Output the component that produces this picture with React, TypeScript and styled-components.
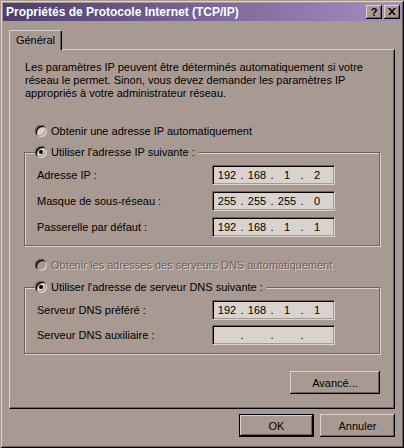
import { Fragment } from "react";
import styled, { createGlobalStyle } from "styled-components";

const face = "#a89a92";
const light = "#ded4ce";
const shadow = "#6c625c";
const field = "#dad2cd";

type Ip = string[];

const ipRows: { label: string; ip: Ip }[] = [
  { label: "Adresse IP :", ip: ["192", "168", "1", "2"] },
  { label: "Masque de sous-réseau :", ip: ["255", "255", "255", "0"] },
  { label: "Passerelle par défaut :", ip: ["192", "168", "1", "1"] },
];

const dnsRows: { label: string; ip: Ip }[] = [
  { label: "Serveur DNS préféré :", ip: ["192", "168", "1", "1"] },
  { label: "Serveur DNS auxiliaire :", ip: ["", "", "", ""] },
];

const GlobalStyle = createGlobalStyle`
  html, body { margin: 0; padding: 0; background: ${face}; }
  body {
    font-family: "Liberation Sans", Arial, sans-serif;
    font-size: 11px;
    color: #000;
  }
  * { box-sizing: border-box; }
`;

const Window = styled.div`
  width: 404px;
  height: 448px;
  padding: 3px;
  display: flex;
  flex-direction: column;
  background: ${face};
  box-shadow: inset 1px 1px ${face}, inset -1px -1px #000,
    inset 2px 2px ${light}, inset -2px -2px ${shadow};
`;

const TitleBar = styled.div`
  height: 18px;
  display: flex;
  align-items: center;
  gap: 2px;
  padding: 0 1px 0 3px;
  background: linear-gradient(to right, #4b3f6c, #a68cc4);
`;

const Title = styled.div`
  flex: 1;
  color: #fff;
  font-weight: bold;
  font-size: 12px;
  white-space: nowrap;
`;

const TitleButton = styled.div`
  width: 16px;
  height: 14px;
  display: flex;
  align-items: center;
  justify-content: center;
  background: ${face};
  font-weight: bold;
  font-size: 11px;
  padding-bottom: 1px;
  box-shadow: inset -1px -1px #000, inset 1px 1px ${light},
    inset -2px -2px ${shadow};
`;

const Body = styled.div`
  flex: 1;
  display: flex;
  flex-direction: column;
  padding: 9px 6px 0 6px;
`;

const TabStrip = styled.div`
  display: flex;
`;

const Tab = styled.div`
  position: relative;
  z-index: 1;
  width: 53px;
  height: 20px;
  margin-bottom: -1px;
  display: flex;
  align-items: center;
  justify-content: center;
  padding-bottom: 2px;
  background: ${face};
  border-left: 1px solid ${light};
  border-top: 1px solid ${light};
  border-right: 1px solid #000;
  border-radius: 2px 2px 0 0;
  box-shadow: inset -1px 0 ${shadow};
`;

const Panel = styled.div`
  height: 360px;
  display: flex;
  flex-direction: column;
  padding: 11px 13px 0 14px;
  border-left: 1px solid ${light};
  border-top: 1px solid ${light};
  border-right: 1px solid #000;
  border-bottom: 1px solid #000;
  box-shadow: inset -1px -1px ${shadow};
`;

const Intro = styled.p`
  margin: 0 0 0 1px;
  line-height: 13px;
  white-space: nowrap;
`;

const RadioRow = styled.div<{ $top: number; $disabled?: boolean }>`
  height: 14px;
  display: flex;
  align-items: center;
  gap: 4px;
  margin: ${(p) => p.$top}px 0 0 11px;
  white-space: nowrap;
  color: ${(p) => (p.$disabled ? shadow : "#000")};
  text-shadow: ${(p) => (p.$disabled ? `1px 1px ${light}` : "none")};
`;

const Radio = styled.span<{ $checked?: boolean; $disabled?: boolean }>`
  width: 12px;
  height: 12px;
  flex: none;
  border-radius: 50%;
  display: grid;
  place-items: center;
  background: ${(p) => (p.$disabled ? face : field)};
  box-shadow: inset 1px 1px ${shadow}, inset -1px -1px ${light},
    inset 2px 2px #000, inset -2px -2px ${face};

  &::after {
    content: "";
    width: 4px;
    height: 4px;
    border-radius: 50%;
    background: ${(p) => (p.$checked ? "#000" : "transparent")};
  }
`;

const Group = styled.fieldset<{ $top: number }>`
  margin: ${(p) => p.$top}px 1px 0 0;
  padding: 6px 12px 8px 12px;
  border: 1px solid ${shadow};
  box-shadow: inset 1px 1px ${light}, 1px 1px 0 ${light};
  min-inline-size: 0;
`;

const Legend = styled.legend`
  margin-left: -2px;
  padding: 0 4px 0 0;
  height: 14px;
  background: ${face};
`;

const LegendRadio = styled.span`
  height: 14px;
  display: flex;
  align-items: center;
  gap: 4px;
  white-space: nowrap;
`;

const FieldGrid = styled.div<{ $gap: number }>`
  display: grid;
  grid-template-columns: 175px 123px;
  row-gap: ${(p) => p.$gap}px;
  align-items: center;
`;

const FieldLabel = styled.span`
  white-space: nowrap;
`;

const IpBox = styled.div`
  width: 123px;
  height: 20px;
  display: flex;
  align-items: center;
  padding-left: 1px;
  background: ${field};
  border: 1px solid;
  border-color: ${shadow} ${light} ${light} ${shadow};
  box-shadow: inset 1px 1px #000, inset -1px -1px ${face};
`;

const Octet = styled.span`
  width: 26px;
  text-align: center;
`;

const Dot = styled.span`
  width: 4px;
  text-align: center;
`;

const ButtonRow = styled.div<{ $top: number; $right?: number }>`
  display: flex;
  justify-content: flex-end;
  gap: 6px;
  margin: ${(p) => p.$top}px ${(p) => p.$right ?? 0}px 0 0;
`;

const PushButton = styled.div<{ $w: number; $default?: boolean }>`
  width: ${(p) => p.$w}px;
  height: 23px;
  display: flex;
  align-items: center;
  justify-content: center;
  background: ${face};
  border: ${(p) => (p.$default ? "1px solid #000" : "none")};
  box-shadow: inset -1px -1px #000, inset 1px 1px ${light},
    inset -2px -2px ${shadow};
`;

function IpField({ ip }: { ip: Ip }) {
  return (
    <IpBox>
      {ip.map((o, i) => (
        <Fragment key={i}>
          <Octet>{o}</Octet>
          {i < 3 && <Dot>.</Dot>}
        </Fragment>
      ))}
    </IpBox>
  );
}

export default function App() {
  return (
    <>
      <GlobalStyle />
      <Window>
        <TitleBar>
          <Title>Propriétés de Protocole Internet (TCP/IP)</Title>
          <TitleButton>?</TitleButton>
          <TitleButton>
            <svg width="8" height="7" viewBox="0 0 8 7">
              <path d="M0 0h2l2 2.5L6 0h2L5 3.5 8 7H6L4 4.5 2 7H0l3-3.5z" fill="#000" />
            </svg>
          </TitleButton>
        </TitleBar>
        <Body>
          <TabStrip>
            <Tab>Général</Tab>
          </TabStrip>
          <Panel>
            <Intro>
              Les paramètres IP peuvent être déterminés automatiquement si votre
              <br />
              réseau le permet. Sinon, vous devez demander les paramètres IP
              <br />
              appropriés à votre administrateur réseau.
            </Intro>

            <RadioRow $top={24}>
              <Radio />
              Obtenir une adresse IP automatiquement
            </RadioRow>

            <Group $top={7}>
              <Legend>
                <LegendRadio>
                  <Radio $checked />
                  Utiliser l'adresse IP suivante :
                </LegendRadio>
              </Legend>
              <FieldGrid $gap={6}>
                {ipRows.map((r) => (
                  <Fragment key={r.label}>
                    <FieldLabel>{r.label}</FieldLabel>
                    <IpField ip={r.ip} />
                  </Fragment>
                ))}
              </FieldGrid>
            </Group>

            <RadioRow $top={12} $disabled>
              <Radio $disabled />
              Obtenir les adresses des serveurs DNS automatiquement
            </RadioRow>

            <Group $top={8}>
              <Legend>
                <LegendRadio>
                  <Radio $checked />
                  Utiliser l'adresse de serveur DNS suivante :
                </LegendRadio>
              </Legend>
              <FieldGrid $gap={5}>
                {dnsRows.map((r) => (
                  <Fragment key={r.label}>
                    <FieldLabel>{r.label}</FieldLabel>
                    <IpField ip={r.ip} />
                  </Fragment>
                ))}
              </FieldGrid>
            </Group>

            <ButtonRow $top={17} $right={1}>
              <PushButton $w={90}>Avancé...</PushButton>
            </ButtonRow>
          </Panel>

          <ButtonRow $top={5}>
            <PushButton $w={75} $default>
              OK
            </PushButton>
            <PushButton $w={75}>Annuler</PushButton>
          </ButtonRow>
        </Body>
      </Window>
    </>
  );
}
